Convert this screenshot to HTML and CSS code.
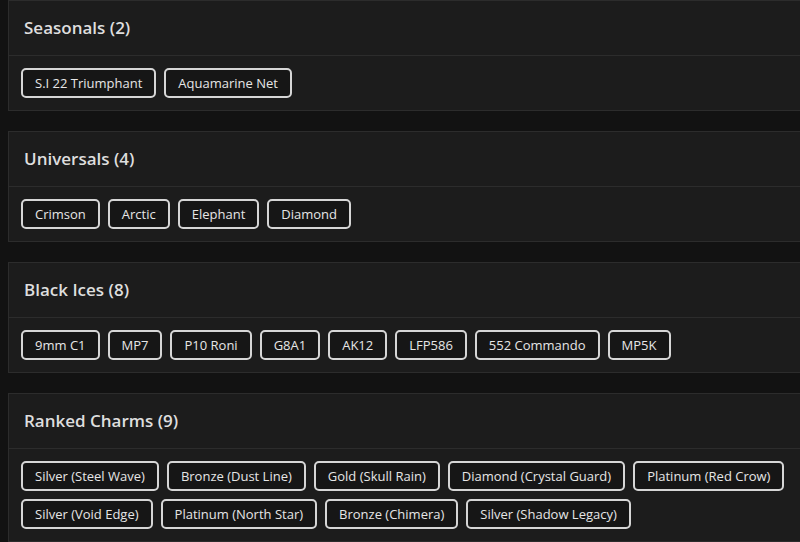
FILE: index.html
```html
<!DOCTYPE html>
<html lang="en">
<head>
    <meta charset="UTF-8">
    <meta name="viewport" content="width=device-width, initial-scale=1.0">
    <title>Charms</title>
    <link rel="stylesheet" href="styles.css">
</head>
<body>
    <div class="lista">
        <section class="grupo">
            <h2 class="grupo-titulo">Seasonals (2)</h2>
            <div class="grupo-itens">
                <button class="item">S.I 22 Triumphant</button>
                <button class="item">Aquamarine Net</button>
            </div>
        </section>

        <section class="grupo">
            <h2 class="grupo-titulo">Universals (4)</h2>
            <div class="grupo-itens">
                <button class="item">Crimson</button>
                <button class="item">Arctic</button>
                <button class="item">Elephant</button>
                <button class="item">Diamond</button>
            </div>
        </section>

        <section class="grupo">
            <h2 class="grupo-titulo">Black Ices (8)</h2>
            <div class="grupo-itens">
                <button class="item">9mm C1</button>
                <button class="item">MP7</button>
                <button class="item">P10 Roni</button>
                <button class="item">G8A1</button>
                <button class="item">AK12</button>
                <button class="item">LFP586</button>
                <button class="item">552 Commando</button>
                <button class="item">MP5K</button>
            </div>
        </section>

        <section class="grupo">
            <h2 class="grupo-titulo">Ranked Charms (9)</h2>
            <div class="grupo-itens">
                <button class="item">Silver (Steel Wave)</button>
                <button class="item">Bronze (Dust Line)</button>
                <button class="item">Gold (Skull Rain)</button>
                <button class="item">Diamond (Crystal Guard)</button>
                <button class="item">Platinum (Red Crow)</button>
                <button class="item">Silver (Void Edge)</button>
                <button class="item">Platinum (North Star)</button>
                <button class="item">Bronze (Chimera)</button>
                <button class="item">Silver (Shadow Legacy)</button>
            </div>
        </section>
    </div>
</body>
</html>
```

FILE: styles.css
```css
html {
    overflow: hidden;
}
body {
    font-family: "Open Sans", "DejaVu Sans", sans-serif;
    margin: 0;
    padding: 0;
    background-color: #121212;
    color: #e6e6e6;
}
.lista {
    width: 830px;
    padding: 0 0 0 8px;
}
.grupo {
    background-color: #1c1c1c;
    border: 1px solid #2c2c2c;
    margin-bottom: 20px;
}
.grupo-titulo {
    margin: 0;
    padding: 0 15px;
    height: 54px;
    line-height: 54px;
    font-size: 17px;
    font-weight: 600;
    color: #dedede;
    border-bottom: 1px solid #2c2c2c;
}
.grupo-itens {
    display: flex;
    flex-wrap: wrap;
    gap: 8px;
    padding: 12px 12px;
    max-width: 780px;
}
.item {
    font-family: inherit;
    font-size: 13px;
    color: #e6e6e6;
    background-color: #161616;
    border: 2px solid #d6d6d6;
    border-radius: 5px;
    padding: 0 12px;
    height: 30px;
    cursor: pointer;
}
.item:hover {
    background-color: #222;
}
```
